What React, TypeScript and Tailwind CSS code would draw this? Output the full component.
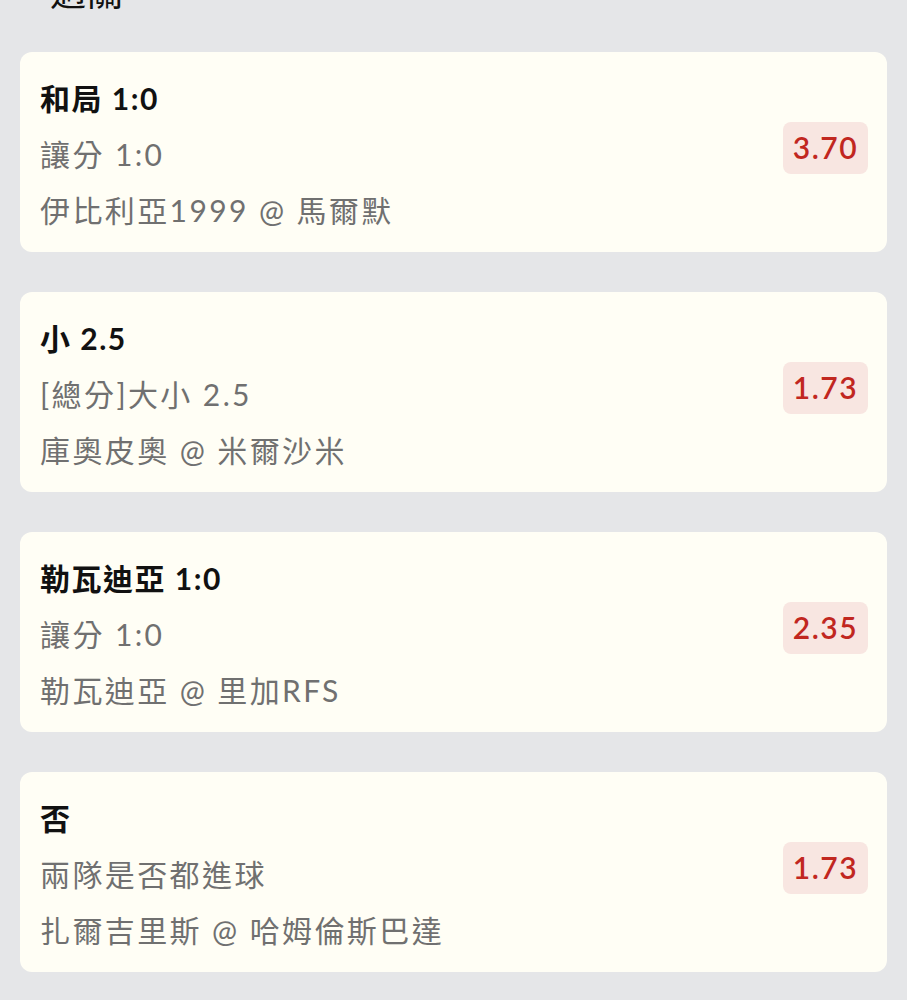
import React from "react";

const bets = [
  { title: "和局 1:0", market: "讓分 1:0", match: "伊比利亞1999 @ 馬爾默", odds: "3.70" },
  { title: "小 2.5", market: "[總分]大小 2.5", match: "庫奧皮奧 @ 米爾沙米", odds: "1.73" },
  { title: "勒瓦迪亞 1:0", market: "讓分 1:0", match: "勒瓦迪亞 @ 里加RFS", odds: "2.35" },
  { title: "否", market: "兩隊是否都進球", match: "扎爾吉里斯 @ 哈姆倫斯巴達", odds: "1.73" },
];

export default function App() {
  return (
    <div
      className="min-h-[1000px] w-full bg-[#e5e6e8] overflow-hidden"
      style={{ fontFamily: 'Lato, "Noto Sans CJK TC", sans-serif' }}
    >
      <div className="h-[52px] overflow-hidden pl-[50px]">
        <div className="text-[36px] leading-[36px] tracking-[1px] text-[#111] -mt-[26px]">過關</div>
      </div>
      <div className="flex flex-col gap-[40px] px-[20px]">
        {bets.map((b, i) => (
          <div
            key={i}
            className="flex h-[200px] items-center justify-between rounded-[12px] bg-[#fffef5] pl-[20px] pr-[19px]"
          >
            <div className="flex flex-col pt-[3px]">
              <div className="text-[30px] leading-[56px] font-bold tracking-[1.5px] text-[#111]">{b.title}</div>
              <div className="text-[30px] leading-[56px] tracking-[2.4px] text-[#707070]">{b.market}</div>
              <div className="text-[30px] leading-[56px] tracking-[2.4px] text-[#707070]">{b.match}</div>
            </div>
            <div className="mb-[9px] flex h-[52px] w-[85px] items-center justify-center rounded-[8px] bg-[#f8e6e1] text-[30px] font-semibold tracking-[1.5px] text-[#c1271f]">
              {b.odds}
            </div>
          </div>
        ))}
      </div>
    </div>
  );
}
